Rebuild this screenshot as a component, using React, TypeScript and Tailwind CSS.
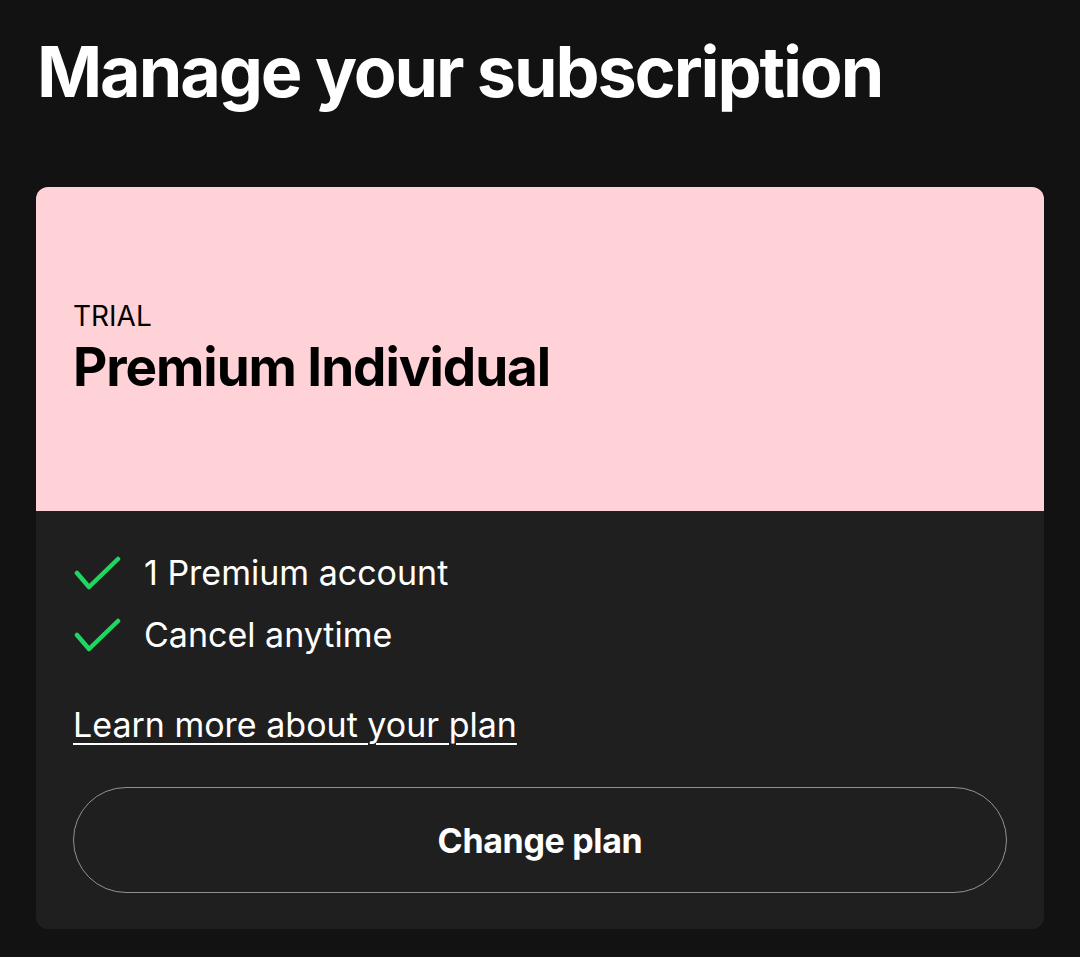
const features = ['1 Premium account', 'Cancel anytime'];

function CheckMark() {
  return (
    <svg width="48" height="36" viewBox="0 0 48 36" fill="none" className="shrink-0">
      <path d="M4 18 L16 32 L45 4" stroke="#1ed760" strokeWidth="4.5" strokeLinecap="round" strokeLinejoin="round" />
    </svg>
  );
}

export default function App() {
  return (
    <div className="min-h-screen bg-[#121212] px-[36px] pt-[37px] pb-[28px] font-['Inter',sans-serif] text-white">
      <h1 className="ml-[1px] text-[70px] font-bold leading-none tracking-[-0.03em]">
        Manage your subscription
      </h1>

      <div className="mt-[80px] w-[1008px] overflow-hidden rounded-[12px] bg-[#1f1f1f]">
        <div className="bg-[#ffd2d7] px-[37px] pt-[115px] pb-[117px] text-black">
          <p className="text-[28px] leading-none">TRIAL</p>
          <h2 className="mt-[11px] text-[53px] font-bold leading-none tracking-[-0.02em]">
            Premium Individual
          </h2>
        </div>

        <div className="px-[37px] pt-[42px] pb-[36px]">
          <ul className="flex flex-col gap-[22px]">
            {features.map((f) => (
              <li key={f} className="flex items-center gap-[23px]">
                <CheckMark />
                <span className="text-[34px] leading-[40px]">{f}</span>
              </li>
            ))}
          </ul>

          <a
            href="#"
            className="mt-[50px] block w-fit text-[34px] leading-[40px] underline decoration-2 underline-offset-[6px]"
          >
            Learn more about your plan
          </a>

          <button className="mt-[42px] flex h-[106px] w-full items-center justify-center rounded-full border-[1.5px] border-[#929292] text-[34px] font-bold tracking-[-0.01em]">
            Change plan
          </button>
        </div>
      </div>
    </div>
  );
}
